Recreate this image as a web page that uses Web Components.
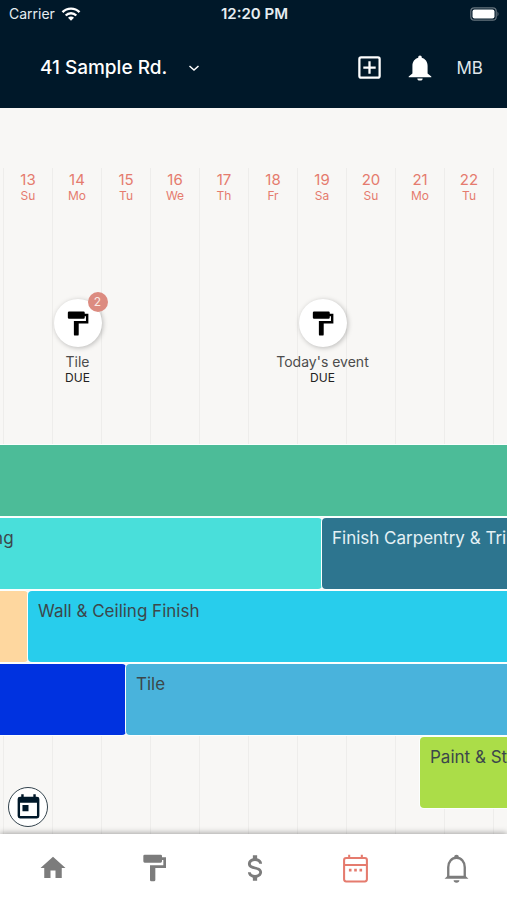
<!DOCTYPE html>
<html lang="en">
<head>
<meta charset="utf-8">
<meta name="viewport" content="width=device-width, initial-scale=1">
<title>Schedule</title>
<style>
  :root {
    --navy: #001829;
    --paper: #f8f7f5;
    --coral: #e57b6e;
    --grey: #7c7c7c;
    --day: 49px;
  }
  body {
    margin: 0;
    font-family: Inter, "Liberation Sans", sans-serif;
    background: var(--paper);
    color: #444;
  }
</style>
</head>
<body>
<schedule-app>
  <status-bar slot="top" carrier="Carrier" time="12:20 PM"></status-bar>
  <app-header slot="top" project="41 Sample Rd." initials="MB"></app-header>

  <time-line first="13" count="11">
    <due-event slot="events" day="2" count="2">Tile</due-event>
    <due-event slot="events" day="7">Today's event</due-event>

    <phase-row>
      <phase-bar from="1" to="13" color="#4cbc98"></phase-bar>
    </phase-row>
    <phase-row>
      <phase-bar from="1" to="8" color="#49dfda">ing</phase-bar>
      <phase-bar from="8" to="13" color="#2d758f" light>Finish Carpentry &amp; Trim</phase-bar>
    </phase-row>
    <phase-row>
      <phase-bar from="1" to="2" color="#fed79f"></phase-bar>
      <phase-bar from="2" to="13" color="#28cdec">Wall &amp; Ceiling Finish</phase-bar>
    </phase-row>
    <phase-row>
      <phase-bar from="1" to="4" color="#0032e0"></phase-bar>
      <phase-bar from="4" to="13" color="#49b3dc">Tile</phase-bar>
    </phase-row>
    <phase-row>
      <phase-bar from="10" to="13" color="#abdd48">Paint &amp; Stain</phase-bar>
    </phase-row>
  </time-line>

  <today-button slot="floating"></today-button>
  <tab-bar slot="bottom" active="Schedule"></tab-bar>
</schedule-app>

<script>
const ICONS = {
  home: '<path d="M10 20v-6h4v6h5v-8h3L12 3 2 12h3v8z"/>',
  roller: '<path d="M18 4V3a1 1 0 0 0-1-1H5a1 1 0 0 0-1 1v4a1 1 0 0 0 1 1h12a1 1 0 0 0 1-1V6h1v4H9v11a1 1 0 0 0 1 1h2a1 1 0 0 0 1-1v-9h8V4z"/>',
  dollar: '<path d="M7 15h2c0 1.080 1.370 2 3 2s3-.920 3-2c0-1.100-1.040-1.500-3.240-2.030C9.640 12.440 7 11.780 7 9c0-1.790 1.470-3.310 3.500-3.820V3h3v2.180C15.530 5.690 17 7.210 17 9h-2c0-1.080-1.370-2-3-2s-3 .920-3 2c0 1.100 1.040 1.500 3.240 2.030C14.360 11.560 17 12.220 17 15c0 1.790-1.470 3.310-3.500 3.820V21h-3v-2.180C8.470 18.310 7 16.790 7 15z"/>',
  calendar: '<g fill="none" stroke="currentColor" stroke-width="1.500"><rect x="3.700" y="4.400" width="16.600" height="17" rx="1.500"/><path d="M4 9.500h16M7.400 2v2.400M16.600 2v2.400"/></g><path d="M7.200 12.200h1.900v1.900H7.200zM11.050 12.200h1.900v1.900h-1.900zM14.900 12.200h1.900v1.900h-1.900z"/>',
  bellOutline: '<path fill="none" stroke="currentColor" stroke-width="1.700" d="M6 18.200V11c0-3.800 2.500-6.800 6-6.800s6 3 6 6.800v7.200"/><path d="M10.300 4.400V3.700a1.700 1.700 0 0 1 3.400 0v.7zM3.300 19.500 5.600 17.300h12.800l2.300 2.200zM9.900 20.500h4.200a2.100 1.800 0 0 1-4.200 0z"/>',
  bell: '<path d="M12 1.300c.9 0 1.500.6 1.500 1.500v.5c3 .8 5 3.500 5 6.700v6.700l3.200 2.500v.8H2.300v-.8l3.200-2.500V10c0-3.200 2-5.900 5-6.700v-.5c0-.9.6-1.500 1.500-1.500zM9.700 20.900h4.600c0 1.200-1 1.900-2.300 1.900s-2.300-.7-2.300-1.900z"/>',
  plusBox: '<g fill="none" stroke="currentColor" stroke-width="2"><rect x="3" y="3" width="18" height="18" rx="1.500"/><path d="M12 6.500v11M6.500 12h11"/></g>',
  chevron: '<path fill="none" stroke="currentColor" stroke-width="3" d="M3 8l9 8 9-8"/>',
  today: '<path d="M7 10h5v5H7zM19 19H5V8h14zM19 3h-1V1h-2v2H8V1H6v2H5a2 2 0 0 0-2 2v14a2 2 0 0 0 2 2h14a2 2 0 0 0 2-2V5a2 2 0 0 0-2-2z" fill-rule="evenodd"/>'
};

const WEEKDAYS = ['Su', 'Mo', 'Tu', 'We', 'Th', 'Fr', 'Sa'];

function icon(name, size) {
  return `<svg viewBox="0 0 24 24" width="${size}" height="${size}" fill="currentColor" aria-hidden="true">${ICONS[name]}</svg>`;
}

const BUTTON_RESET = `
  button {
    display: flex;
    align-items: center;
    justify-content: center;
    margin: 0;
    padding: 0;
    border: 0;
    background: none;
    color: inherit;
    font: inherit;
    cursor: pointer;
  }
  svg { display: block; flex: none; }
`;

class ScheduleApp extends HTMLElement {
  constructor() {
    super();
    this.attachShadow({ mode: 'open' }).innerHTML = `
      <style>
        :host {
          display: flex;
          flex-direction: column;
          height: 100vh;
          overflow: hidden;
        }
        main {
          flex: 1;
          min-height: 0;
          position: relative;
          display: flex;
        }
      </style>
      <slot name="top"></slot>
      <main>
        <slot></slot>
        <slot name="floating"></slot>
      </main>
      <slot name="bottom"></slot>
    `;
  }
}

class StatusBar extends HTMLElement {
  constructor() {
    super();
    this.attachShadow({ mode: 'open' }).innerHTML = `
      <style>
        :host {
          flex: none;
          display: grid;
          grid-template-columns: 1fr auto 1fr;
          align-items: center;
          height: 27px;
          padding: 0 7px 0 9px;
          background: var(--navy);
          color: #e6edf1;
          font-size: 14px;
        }
        .carrier { display: flex; align-items: center; gap: 6px; }
        .time { font-size: 15px; font-weight: 600; }
        .battery { justify-self: end; }
        svg { display: block; }
      </style>
      <span class="carrier">
        <span>${this.getAttribute('carrier')}</span>
        <svg width="20" height="14" viewBox="0 0 20 14" aria-hidden="true">
          <g fill="none" stroke="#fff" stroke-width="2.400">
            <path d="M1.500 5.200a12 12 0 0 1 17 0"/>
            <path d="M4.700 8.500a7.500 7.500 0 0 1 10.600 0"/>
          </g>
          <path fill="#fff" d="M7 10.800a4.200 4.200 0 0 1 6 0l-3 3z"/>
        </svg>
      </span>
      <span class="time">${this.getAttribute('time')}</span>
      <svg class="battery" width="30" height="14" viewBox="0 0 30 14" aria-hidden="true">
        <rect x=".8" y=".8" width="25.400" height="12.400" rx="3.500" fill="none" stroke="#66747e" stroke-width="1.200"/>
        <rect x="2.500" y="2.500" width="22" height="9" rx="2" fill="#fff"/>
        <path d="M27.500 4.500q2 2.500 0 5z" fill="#66747e"/>
      </svg>
    `;
  }
}

class AppHeader extends HTMLElement {
  constructor() {
    super();
    this.attachShadow({ mode: 'open' }).innerHTML = `
      <style>
        ${BUTTON_RESET}
        :host {
          flex: none;
          display: flex;
          align-items: center;
          justify-content: space-between;
          height: 81px;
          padding: 0 24px 0 40px;
          background: var(--navy);
          color: #fff;
        }
        .project { gap: 21px; font-size: 19px; font-weight: 500; }
        .actions { display: flex; align-items: center; gap: 23px; }
        .user { font-size: 17px; color: #dfe6ea; }
      </style>
      <button class="project" aria-haspopup="listbox">
        <span>${this.getAttribute('project')}</span>${icon('chevron', 12)}
      </button>
      <div class="actions">
        <button aria-label="Add">${icon('plusBox', 27)}</button>
        <button aria-label="Notifications">${icon('bell', 28)}</button>
        <button class="user">${this.getAttribute('initials')}</button>
      </div>
    `;
  }
}

class TimeLine extends HTMLElement {
  constructor() {
    super();
    const first = Number(this.getAttribute('first'));
    const count = Number(this.getAttribute('count'));
    let days = '';
    for (let i = 0; i < count; i++) {
      days += `<li><span>${first + i}</span><small>${WEEKDAYS[i % 7]}</small></li>`;
    }

    // days, events and bars share one grid cell so the day lines run behind
    this.attachShadow({ mode: 'open' }).innerHTML = `
      <style>
        :host {
          flex: 1;
          min-width: 0;
          display: grid;
          grid-template-columns: 100%;
          padding-top: 60px;
          overflow: hidden;
        }
        .days, .layer { grid-area: 1 / 1; }
        .days {
          display: grid;
          grid-template-columns: repeat(${count}, var(--day));
          margin: 0;
          padding: 0 0 0 3px;
          list-style: none;
        }
        li {
          display: flex;
          flex-direction: column;
          align-items: center;
          box-sizing: border-box;
          padding-top: 3px;
          border-left: 1px solid #eeedeb;
          color: var(--coral);
        }
        li span { font-size: 15px; line-height: 18px; }
        li small { font-size: 12px; line-height: 14px; }
        .events {
          display: grid;
          grid-template-columns: repeat(${count}, var(--day));
          height: 146px;
          padding: 131px 0 0 4px;
        }
        /* a phase starts and ends at midday, half a column before the day line */
        .rows {
          display: flex;
          flex-direction: column;
          gap: 2px;
          margin-left: -21px;
        }
      </style>
      <ol class="days">${days}</ol>
      <div class="layer">
        <div class="events"><slot name="events"></slot></div>
        <div class="rows"><slot></slot></div>
      </div>
    `;
  }
}

class DueEvent extends HTMLElement {
  constructor() {
    super();
    const count = this.getAttribute('count');
    this.style.gridColumn = this.getAttribute('day');
    this.attachShadow({ mode: 'open' }).innerHTML = `
      <style>
        ${BUTTON_RESET}
        :host {
          display: flex;
          flex-direction: column;
          align-items: center;
          white-space: nowrap;
        }
        button {
          position: relative;
          width: 48px;
          height: 48px;
          margin-bottom: 6px;
          border-radius: 50%;
          background: #fff;
          color: #000;
          box-shadow: 1px 1px 5px rgba(0, 0, 0, .25);
        }
        .badge {
          position: absolute;
          top: -7px;
          right: -6px;
          width: 20px;
          height: 20px;
          border-radius: 50%;
          background: #dc8b80;
          color: #fbeae4;
          font-size: 12px;
          line-height: 20px;
        }
        .name { font-size: 14px; line-height: 17px; color: #4c4c4c; }
        .due { font-size: 12px; line-height: 15px; color: #222; }
      </style>
      <button aria-label="Open event">
        ${icon('roller', 29)}
        ${count ? `<span class="badge">${count}</span>` : ''}
      </button>
      <span class="name"><slot></slot></span>
      <span class="due">DUE</span>
    `;
  }
}

class PhaseRow extends HTMLElement {
  constructor() {
    super();
    this.attachShadow({ mode: 'open' }).innerHTML = `
      <style>
        :host {
          display: grid;
          grid-template-columns: repeat(12, var(--day));
          height: 71px;
        }
      </style>
      <slot></slot>
    `;
  }
}

class PhaseBar extends HTMLElement {
  constructor() {
    super();
    this.style.gridColumn = `${this.getAttribute('from')} / ${this.getAttribute('to')}`;
    this.style.setProperty('--fill', this.getAttribute('color'));
    this.attachShadow({ mode: 'open' }).innerHTML = `
      <style>
        :host {
          display: block;
          box-sizing: border-box;
          padding: 10px;
          border-radius: 4px;
          background: var(--fill);
          box-shadow: 0 0 0 1px #fbfffe;
          color: #3c474b;
          font-size: 17px;
          line-height: 20px;
          white-space: nowrap;
          overflow: hidden;
        }
        :host([light]) { color: #e4f1f5; }
      </style>
      <slot></slot>
    `;
  }
}

class TodayButton extends HTMLElement {
  constructor() {
    super();
    this.attachShadow({ mode: 'open' }).innerHTML = `
      <style>
        ${BUTTON_RESET}
        :host { position: absolute; left: 8px; bottom: 7px; }
        button {
          box-sizing: border-box;
          width: 40px;
          height: 40px;
          border: 1px solid #33434d;
          border-radius: 50%;
          background: #fff;
          color: var(--navy);
        }
      </style>
      <button aria-label="Go to today">${icon('today', 29)}</button>
    `;
  }
}

class TabBar extends HTMLElement {
  constructor() {
    super();
    const active = this.getAttribute('active');
    const tabs = [
      ['Home', 'home', 30],
      ['Tasks', 'roller', 32],
      ['Budget', 'dollar', 34],
      ['Schedule', 'calendar', 33],
      ['Alerts', 'bellOutline', 33]
    ];
    this.attachShadow({ mode: 'open' }).innerHTML = `
      <style>
        ${BUTTON_RESET}
        :host { flex: none; display: block; position: relative; }
        nav {
          display: grid;
          grid-template-columns: repeat(5, 1fr);
          box-sizing: border-box;
          height: 66px;
          padding: 2px 0 0 2px;
          background: #fff;
          color: var(--grey);
          box-shadow: 0 -1px 6px rgba(0, 0, 0, .35);
        }
        .active { color: var(--coral); }
      </style>
      <nav>
        ${tabs.map(([label, name, size]) => `
          <button aria-label="${label}" class="${label === active ? 'active' : ''}">${icon(name, size)}</button>
        `).join('')}
      </nav>
    `;
  }
}

window.customElements.define('schedule-app', ScheduleApp);
window.customElements.define('status-bar', StatusBar);
window.customElements.define('app-header', AppHeader);
window.customElements.define('time-line', TimeLine);
window.customElements.define('due-event', DueEvent);
window.customElements.define('phase-row', PhaseRow);
window.customElements.define('phase-bar', PhaseBar);
window.customElements.define('today-button', TodayButton);
window.customElements.define('tab-bar', TabBar);
</script>
</body>
</html>
